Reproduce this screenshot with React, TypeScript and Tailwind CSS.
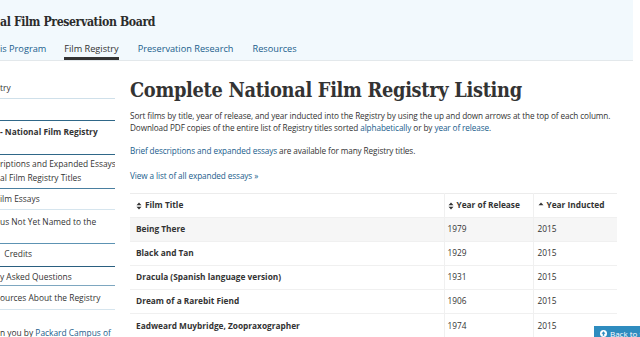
import React from "react";

const sans = { fontFamily: '"Open Sans", "Noto Sans", sans-serif' };
const slab = { fontFamily: '"DejaVu Serif Condensed", "DejaVu Serif", serif' };

const SortBoth = () => (
  <svg width="6" height="8" viewBox="0 0 6 8" className="inline-block mr-[3px] -mt-[1px]">
    <path d="M0.5 3.2 L3 0.5 L5.5 3.2 Z M0.5 4.8 L3 7.5 L5.5 4.8 Z" fill="#333" />
  </svg>
);

const SortUp = () => (
  <svg width="6" height="8" viewBox="0 0 6 8" className="inline-block mr-[3px] -mt-[1px]">
    <path d="M0.5 3.2 L3 0.5 L5.5 3.2 Z" fill="#333" />
  </svg>
);

const sideItems = [
  { lines: ["try"], h: "h-[22px]", pt: "pt-[4px]", border: "border-[#cfe0ea]" },
  { lines: [""], h: "h-[22px]", pt: "pt-[4px]", border: "border-[#2f6788]" },
  { lines: ["- National Film Registry"], h: "h-[34px]", pt: "pt-[4px]", border: "border-[#2f6788]", bold: true },
  { lines: ["riptions and Expanded Essays", "al Film Registry Titles"], h: "h-[34px]", pt: "pt-[2px]", border: "border-[#4a7fa0]" },
  { lines: ["ilm Essays"], h: "h-[21px]", pt: "pt-[3px]", border: "border-[#d6e5ee]" },
  { lines: ["us Not Yet Named to the", ""], h: "h-[34px]", pt: "pt-[5px]", border: "border-[#5d93b3]" },
  { lines: ["  Credits"], h: "h-[23px]", pt: "pt-[3px]", border: "border-[#2a5f80]" },
  { lines: ["y Asked Questions"], h: "h-[19px]", pt: "pt-[3px]", border: "border-[#7ea7c0]" },
  { lines: ["ources About the Registry"], h: "h-[24px]", pt: "pt-[5px]", border: "border-[#d6e5ee]" },
];

const films = [
  { title: "Being There", year: "1979", ind: "2015", gray: true },
  { title: "Black and Tan", year: "1929", ind: "2015" },
  { title: "Dracula (Spanish language version)", year: "1931", ind: "2015" },
  { title: "Dream of a Rarebit Fiend", year: "1906", ind: "2015" },
  { title: "Eadweard Muybridge, Zoopraxographer", year: "1974", ind: "2015" },
];

export default function App() {
  return (
    <div className="relative w-[640px] h-[337px] overflow-hidden bg-white text-[#333]" style={sans}>
      <header className="w-[633px] h-[61px] bg-[#f2f9fd] border-b border-[#e3e8eb]">
        <div className="pt-[13px] h-[38px] text-[12.2px] tracking-[-0.4px] font-bold text-[#2b2b2b] leading-[18px]" style={slab}>
          al Film Preservation Board
        </div>
        <nav className="flex h-[22px] text-[9.2px] text-[#205d8c]">
          <a className="pt-[4px]">is Program</a>
          <a className="ml-[18px] pt-[4px] text-[#333] border-b-[3px] border-[#333] h-[22px]">Film Registry</a>
          <a className="ml-[19px] pt-[4px]">Preservation Research</a>
          <a className="ml-[19px] pt-[4px]">Resources</a>
        </nav>
      </header>

      <div className="flex">
        <aside className="w-[115px] shrink-0 pt-[16px] text-[8.4px] leading-[14px]">
          {sideItems.map((it, i) => (
            <div
              key={i}
              className={`${it.h} ${it.pt} border-b ${it.border} whitespace-pre overflow-hidden ${it.bold ? "font-bold" : ""}`}
            >
              {it.lines.map((l, j) => (
                <div key={j} className="h-[14px]">{l}</div>
              ))}
            </div>
          ))}
          <div className="pt-[16px] whitespace-nowrap">
            n you by <span className="text-[#205d8c]">Packard Campus of</span>
          </div>
        </aside>

        <main className="ml-[15px] w-[487px] pt-[15px]">
          <h1 className="text-[19.8px] tracking-[-0.3px] font-bold leading-[28px] text-[#333] whitespace-nowrap" style={slab}>
            Complete National Film Registry Listing
          </h1>
          <p className="mt-[6px] text-[8.2px] tracking-[-0.1px] leading-[12px] whitespace-nowrap">
            Sort films by title, year of release, and year inducted into the Registry by using the up and down arrows at the top of each column.
            <br />
            Download PDF copies of the entire list of Registry titles sorted{" "}
            <a className="text-[#205d8c]">alphabetically</a> or by <a className="text-[#205d8c]">year of release</a>.
          </p>
          <p className="mt-[11px] text-[8.2px] tracking-[-0.1px] leading-[12px]">
            <a className="text-[#205d8c]">Brief descriptions and expanded essays</a> are available for many Registry titles.
          </p>
          <p className="mt-[13px] text-[8.2px] tracking-[-0.1px] leading-[12px]">
            <a className="text-[#205d8c]">View a list of all expanded essays »</a>
          </p>

          <table className="mt-[11px] w-[487px] border-collapse text-[8.3px] border-t border-[#ececec]">
            <thead>
              <tr className="h-[24px]">
                <th className="text-left font-bold pl-[6px] w-[314px]"><SortBoth />Film Title</th>
                <th className="text-left font-bold pl-[3px] w-[89px] border-l border-[#f0f0f0]"><SortBoth />Year of Release</th>
                <th className="text-left font-bold pl-[4px] border-l border-[#f0f0f0]"><SortUp />Year Inducted</th>
              </tr>
            </thead>
            <tbody>
              {films.map((f) => (
                <tr key={f.title} className={`h-[24px] border-t border-[#f0f0f0] ${f.gray ? "bg-[#f6f6f6]" : ""}`}>
                  <td className="font-bold pl-[6px]">{f.title}</td>
                  <td className="pl-[3px] border-l border-[#f0f0f0]">{f.year}</td>
                  <td className="pl-[4px] border-l border-[#f0f0f0]">{f.ind}</td>
                </tr>
              ))}
            </tbody>
          </table>
        </main>
      </div>

      <div className="absolute left-[594px] top-[326px] w-[70px] h-[20px] bg-[#2e8cbf] text-white text-[8px] pl-[6px] pt-[2px] whitespace-nowrap flex items-start">
        <svg width="7" height="7" viewBox="0 0 8 8" className="mt-[2px] mr-[3px]">
          <circle cx="4" cy="4" r="4" fill="#fff" />
          <path d="M4 1.5 L6.3 4.2 H4.8 V6.5 H3.2 V4.2 H1.7 Z" fill="#2e8cbf" />
        </svg>
        Back to top
      </div>
    </div>
  );
}
